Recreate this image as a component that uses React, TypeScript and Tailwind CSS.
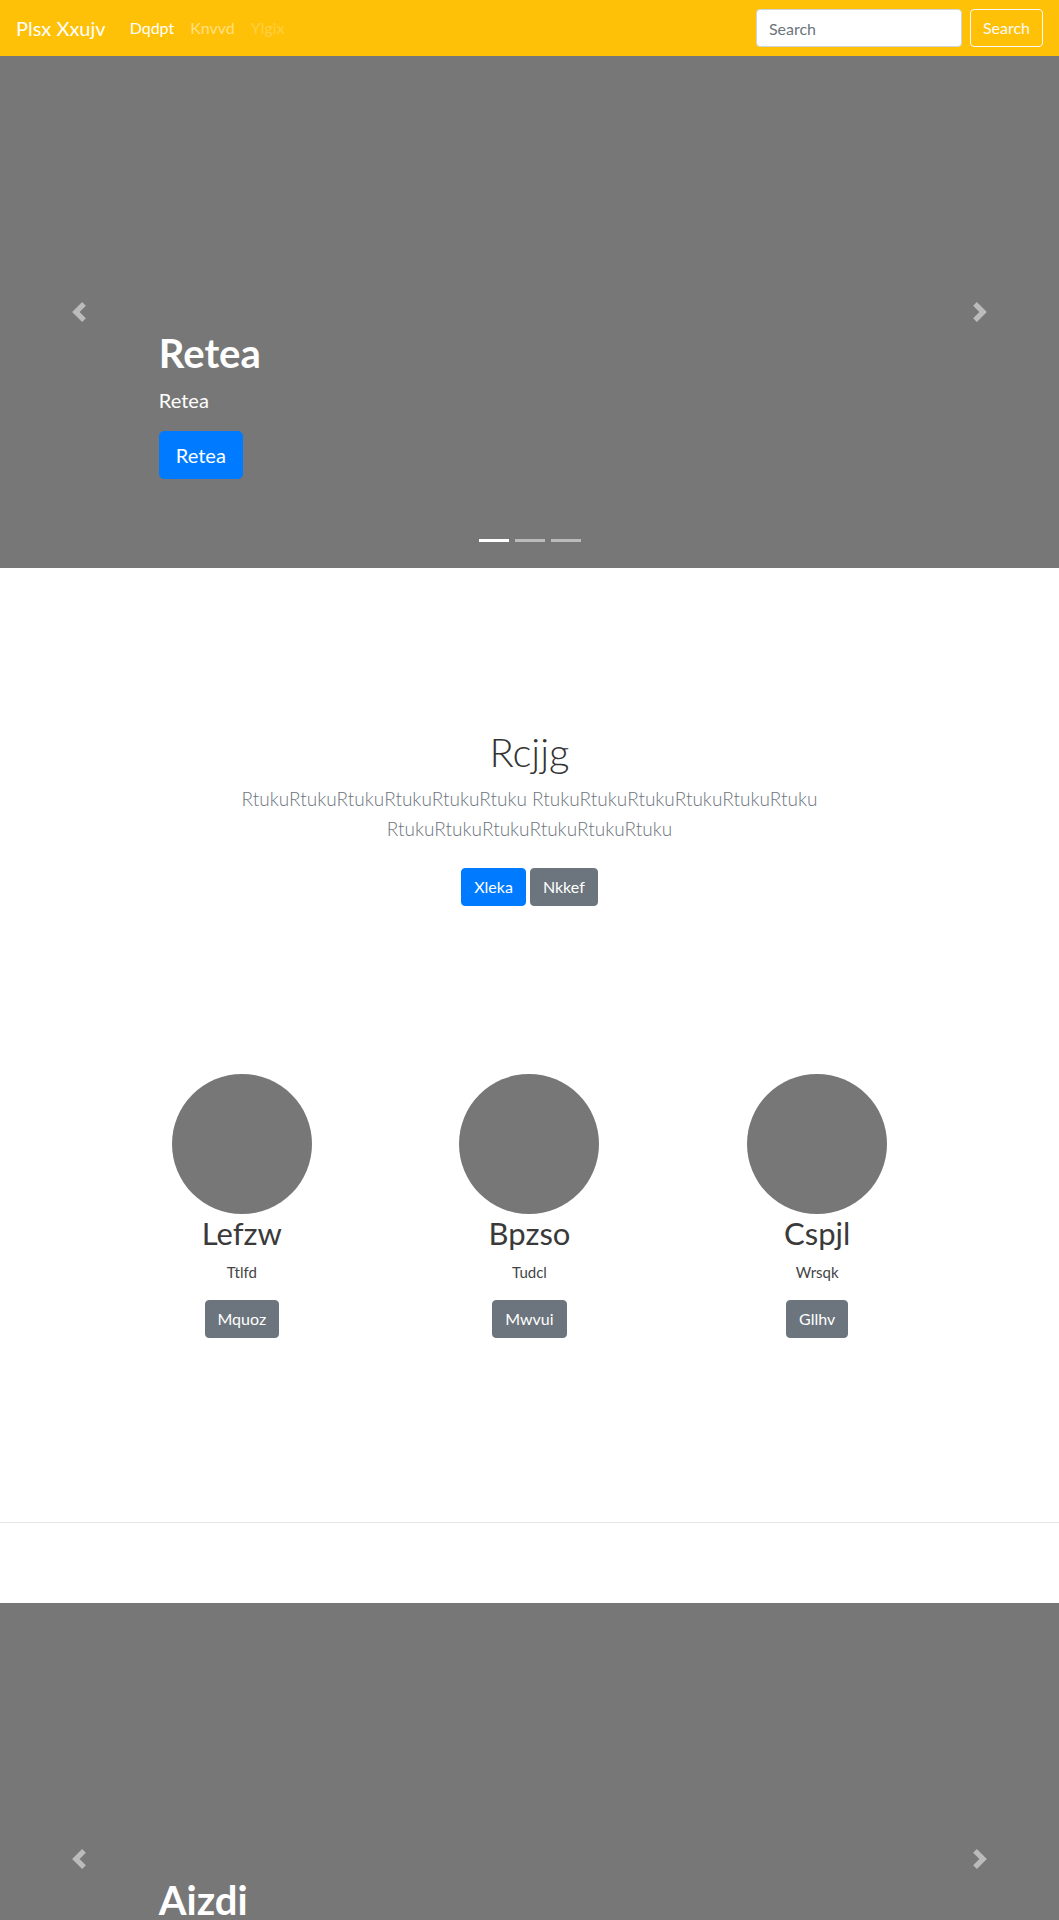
import React from "react";

const ChevronLeft = () => (
  <svg width="20" height="20" viewBox="0 0 8 8" fill="#fff">
    <path d="M5.25 0l-4 4 4 4 1.5-1.5L4.25 4l2.5-2.5L5.25 0z" />
  </svg>
);

const ChevronRight = () => (
  <svg width="20" height="20" viewBox="0 0 8 8" fill="#fff">
    <path d="M2.75 0l-1.5 1.5L3.75 4l-2.5 2.5L2.75 8l4-4-4-4z" />
  </svg>
);

function Carousel({ title }: { title: string }) {
  return (
    <div className="relative h-[512px] bg-[#777] overflow-hidden">
      <div className="absolute inset-y-0 left-0 w-[15%] flex items-center justify-center opacity-50">
        <ChevronLeft />
      </div>
      <div className="absolute inset-y-0 right-0 w-[15%] flex items-center justify-center opacity-50">
        <ChevronRight />
      </div>

      <div className="h-full flex flex-col justify-end pl-[15%] pr-[15%] pb-[89px] text-white">
        <h1 className="text-[40px] leading-[1.2] font-bold mb-2">{title}</h1>
        <p className="text-xl leading-[30px] mb-4">{title}</p>
        <div>
          <button className="h-12 px-4 text-xl leading-[30px] rounded-[5px] bg-[#007bff] border border-[#007bff] text-white">
            {title}
          </button>
        </div>
      </div>

      <div className="absolute bottom-[26px] left-0 right-0 flex justify-center gap-[6px]">
        <span className="w-[30px] h-[3px] bg-white" />
        <span className="w-[30px] h-[3px] bg-white opacity-50" />
        <span className="w-[30px] h-[3px] bg-white opacity-50" />
      </div>
    </div>
  );
}

const people = [
  { name: "Lefzw", role: "Ttlfd", action: "Mquoz" },
  { name: "Bpzso", role: "Tudcl", action: "Mwvui" },
  { name: "Cspjl", role: "Wrsqk", action: "Gllhv" },
];

export default function App() {
  return (
    <div className="font-['Lato','Open_Sans',sans-serif] text-[#212529] bg-white">
      {/* navbar */}
      <nav className="h-14 bg-[#ffc107] flex items-center justify-between px-4">
        <div className="flex items-center">
          <span className="text-xl leading-[30px] text-white mr-4">Plsx Xxujv</span>
          <a className="px-2 text-base text-white">Dqdpt</a>
          <a className="px-2 text-base text-white/50">Knvvd</a>
          <a className="px-2 text-base text-white/25">Ylgix</a>
        </div>
        <div className="flex items-center">
          <input
            placeholder="Search"
            className="w-[206px] h-[38px] px-3 text-base rounded border border-[#ced4da] bg-white outline-none placeholder:text-[#6c757d]"
          />
          <button className="ml-2 h-[38px] px-3 text-base rounded border border-[#f8f9fa] text-[#f8f9fa]">
            Search
          </button>
        </div>
      </nav>

      <Carousel title="Retea" />

      {/* intro */}
      <section className="pt-[160px] pb-12 text-center">
        <div className="max-w-[640px] mx-auto px-[15px]">
          <h1 className="text-[40px] leading-[1.2] font-light text-[#333] mb-2">Rcjjg</h1>
          <p className="text-[19px] leading-[30px] font-light text-[#6c757d] mb-6">
            RtukuRtukuRtukuRtukuRtukuRtuku RtukuRtukuRtukuRtukuRtukuRtuku RtukuRtukuRtukuRtukuRtukuRtuku
          </p>
          <div className="flex justify-center gap-1 mb-2">
            <button className="h-[38px] px-3 text-base rounded bg-[#007bff] border border-[#007bff] text-white">
              Xleka
            </button>
            <button className="h-[38px] px-3 text-base rounded bg-[#6c757d] border border-[#6c757d] text-white">
              Nkkef
            </button>
          </div>
        </div>
      </section>

      {/* people */}
      <section className="mt-[112px]">
        <div className="max-w-[863px] mx-auto grid grid-cols-3">
          {people.map((p) => (
            <div key={p.name} className="flex flex-col items-center text-center mb-6">
              <div className="w-[140px] h-[140px] rounded-full bg-[#777]" />
              <h2 className="text-[31px] leading-[38px] text-[#3a3a3a] mb-2">{p.name}</h2>
              <p className="text-[15px] leading-6 text-[#444] mb-4">{p.role}</p>
              <button className="h-[38px] px-3 text-base rounded bg-[#6c757d] border border-[#6c757d] text-white">
                {p.action}
              </button>
            </div>
          ))}
        </div>
      </section>

      <hr className="mt-[160px] mb-20 border-0 border-t border-black/10" />

      <Carousel title="Aizdi" />
    </div>
  );
}
